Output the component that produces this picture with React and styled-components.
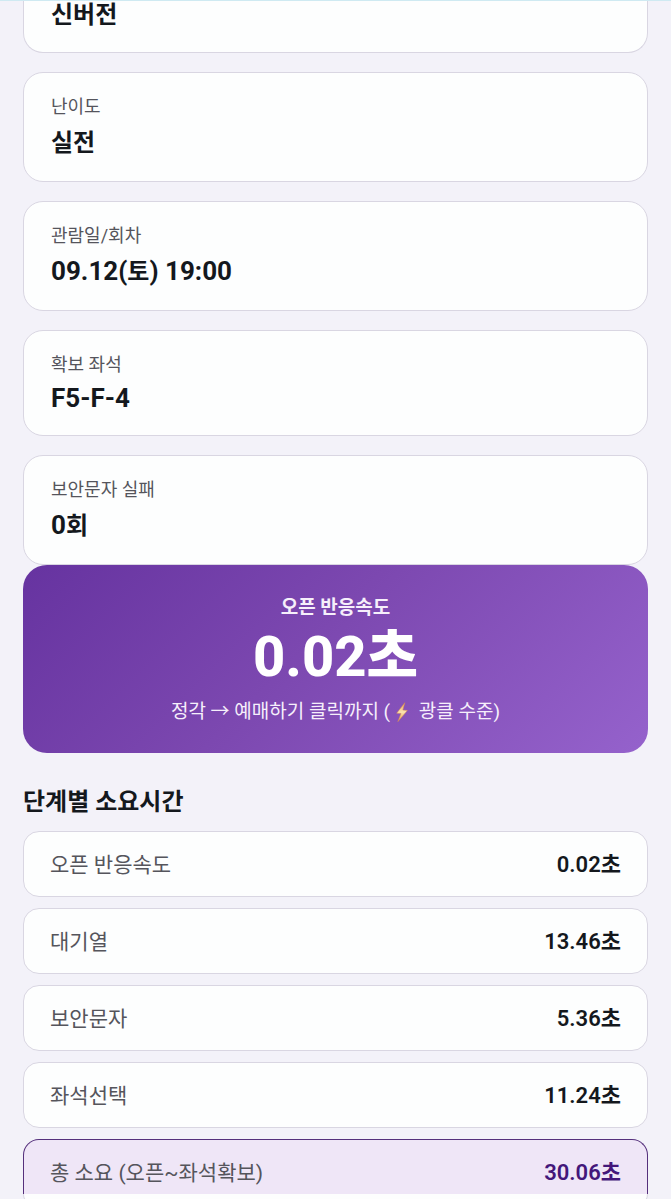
import React from 'react';
import styled, { createGlobalStyle, css } from 'styled-components';

const steps = [
  { name: '오픈 반응속도', time: '0.02초' },
  { name: '대기열', time: '13.46초' },
  { name: '보안문자', time: '5.36초' },
  { name: '좌석선택', time: '11.24초' },
];

const Bolt = () => (
  <BoltIcon viewBox="0 0 24 24" aria-hidden="true">
    <defs>
      <linearGradient id="bolt" x1="0" y1="0" x2="0" y2="1">
        <stop offset="0" stopColor="#e9a45c" />
        <stop offset="0.5" stopColor="#fbe3ae" />
        <stop offset="1" stopColor="#e39a4c" />
      </linearGradient>
    </defs>
    <path
      d="M15.4 0.8 5.6 13.4l5.2.4L7 23.6 18.4 10.2l-5.4-.6z"
      fill="url(#bolt)"
      stroke="#d98d52"
      strokeWidth="0.6"
      strokeLinejoin="round"
    />
  </BoltIcon>
);

const App = () => {
  return (
    <Page>
      <GlobalStyle />
      <CardList>
        <Card $cut>
          <Value>
            <Hangul>신버전</Hangul>
          </Value>
        </Card>
        <Card>
          <Label>난이도</Label>
          <Value>
            <Hangul>실전</Hangul>
          </Value>
        </Card>
        <Card>
          <Label>관람일/회차</Label>
          <Value>
            09.12(<Hangul>토</Hangul>) 19:00
          </Value>
        </Card>
        <Card>
          <Label>확보 좌석</Label>
          <Value $latin>F5-F-4</Value>
        </Card>
        <Card>
          <Label>보안문자 실패</Label>
          <Value>
            0<Hangul>회</Hangul>
          </Value>
        </Card>
      </CardList>

      <Hero>
        <HeroLabel>오픈 반응속도</HeroLabel>
        <HeroValue>0.02초</HeroValue>
        <HeroNote>
          정각 → 예매하기 클릭까지 (<Bolt /> 광클 수준)
        </HeroNote>
      </Hero>

      <Heading>단계별 소요시간</Heading>
      <StepList>
        {steps.map((step) => (
          <Step key={step.name}>
            <StepName>{step.name}</StepName>
            <StepTime>{step.time}</StepTime>
          </Step>
        ))}
        <Step $total>
          <StepName>총 소요 (오픈~좌석확보)</StepName>
          <StepTime $total>30.06초</StepTime>
        </Step>
      </StepList>
      <Tail />
    </Page>
  );
};

const GlobalStyle = createGlobalStyle`
  * {
    box-sizing: border-box;
  }

  body {
    margin: 0;
    background: #f3f2f9;
    color: #14181d;
    font-family: Roboto, 'Noto Sans CJK KR', sans-serif;
  }

  p, h2, ul {
    margin: 0;
    padding: 0;
  }
`;

const Page = styled.main`
  height: 100vh;
  overflow: hidden;
  padding: 0 23px;
  border-top: 1px solid #cfeaf2;
`;

const CardList = styled.section`
  display: flex;
  flex-direction: column;
  gap: 19px;
`;

const Card = styled.article`
  padding: 22px 27px 20px;
  background: #fdfefe;
  border: 1px solid #d9d6e2;
  border-radius: 20px;

  ${({ $cut }) =>
    $cut &&
    css`
      height: 52px;
      padding-top: 0;
      border-top: 0;
      border-radius: 0 0 20px 20px;

      p {
        line-height: 26px;
      }
    `}
`;

const Label = styled.p`
  margin-bottom: 4px;
  font-size: 18px;
  line-height: 24px;
  color: #55555c;
`;

const Value = styled.p`
  font-size: 26px;
  font-weight: 700;
  line-height: ${({ $latin }) => ($latin ? '34px' : '38px')};
`;

const Hangul = styled.span`
  font-size: 24px;
  line-height: 1;
`;

const Hero = styled.section`
  padding: 29px 24px 27px;
  border-radius: 24px;
  background: linear-gradient(135deg, #6633a0 0%, #7c48b0 45%, #9562cc 100%);
  color: #f6effb;
  text-align: center;
`;

const HeroLabel = styled.p`
  font-size: 19px;
  font-weight: 600;
  line-height: 28px;
`;

const HeroValue = styled.p`
  font-size: 56px;
  font-weight: 800;
  line-height: 70px;
  color: #fff;
`;

const HeroNote = styled.p`
  margin-top: 6px;
  font-size: 19px;
  line-height: 28px;
`;

const BoltIcon = styled.svg`
  width: 24px;
  height: 20px;
  vertical-align: -4px;
`;

const Heading = styled.h2`
  margin: 31px 0 11px;
  font-size: 24px;
  font-weight: 700;
  line-height: 36px;
`;

const StepList = styled.ul`
  display: flex;
  flex-direction: column;
  gap: 11px;
  list-style: none;
`;

const Step = styled.li`
  display: flex;
  align-items: center;
  justify-content: space-between;
  padding: 18px 26px 16px;
  background: #fdfefe;
  border: 1px solid #d9d6e2;
  border-radius: 16px;

  ${({ $total }) =>
    $total &&
    css`
      padding-bottom: 6px;
      background: #efe6f7;
      border-color: #55307c;
      border-bottom: 0;
      border-radius: 16px 16px 0 0;
    `}
`;

const StepName = styled.span`
  font-size: 21px;
  line-height: 30px;
  color: #55555c;
`;

const StepTime = styled.span`
  font-size: 22px;
  font-weight: 600;
  line-height: 30px;
  color: ${({ $total }) => ($total ? '#43177a' : 'inherit')};
`;

const Tail = styled.div`
  height: 12px;
  background: #fdfefe;
  border: 1px solid #d9d6e2;
  border-top: 0;
  border-radius: 0 0 12px 12px;
`;

export default App;
